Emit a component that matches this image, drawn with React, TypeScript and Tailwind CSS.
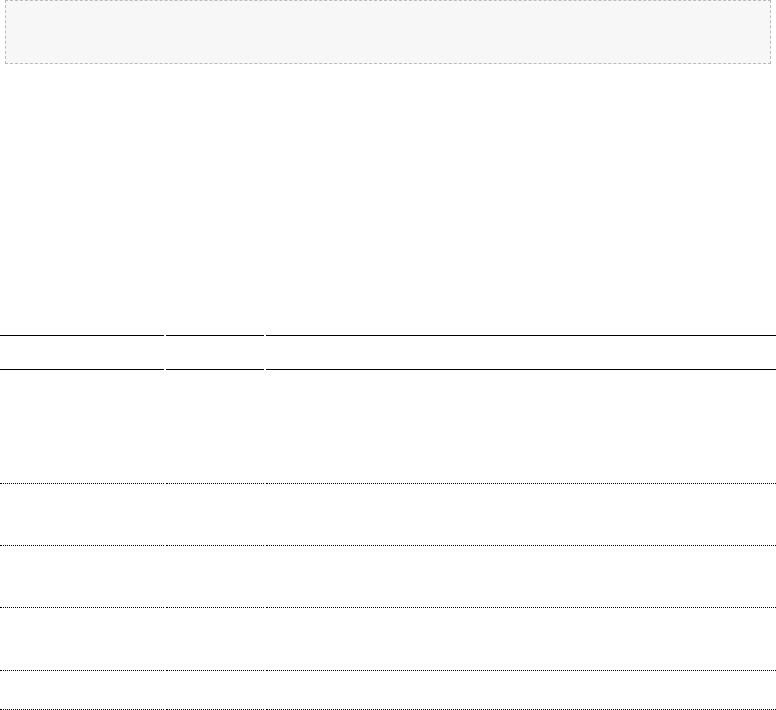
import React from 'react';

const bodyRows = [
    { h: 'h-[114px]' },
    { h: 'h-[62px]' },
    { h: 'h-[62px]' },
    { h: 'h-[63px]' },
    { h: 'h-[39px]' },
];

function Row({ h }: { h: string }) {
    return (
        <div className="grid grid-cols-[164px_98px_1fr] gap-x-[2px]">
            <div className={`${h} border-b border-dotted border-black`} />
            <div className={`${h} border-b border-dotted border-black`} />
            <div className={`${h} border-b border-dotted border-black`} />
        </div>
    );
}

export default function App() {
    return (
        <div className="w-[776px] min-h-[710px] bg-white font-['Liberation_Sans',sans-serif] overflow-hidden">
            <div className="mx-[5px] h-[64px] border border-dashed border-[#bbbbbb] bg-[#f7f7f7]" />

            <div className="mt-[271px]">
                <div className="grid grid-cols-[164px_98px_1fr] gap-x-[2px]">
                    <div className="h-[35px] border-y border-black" />
                    <div className="h-[35px] border-y border-black" />
                    <div className="h-[35px] border-y border-black" />
                </div>
                {bodyRows.map((r, i) => (
                    <Row key={i} h={r.h} />
                ))}
            </div>
        </div>
    );
}
